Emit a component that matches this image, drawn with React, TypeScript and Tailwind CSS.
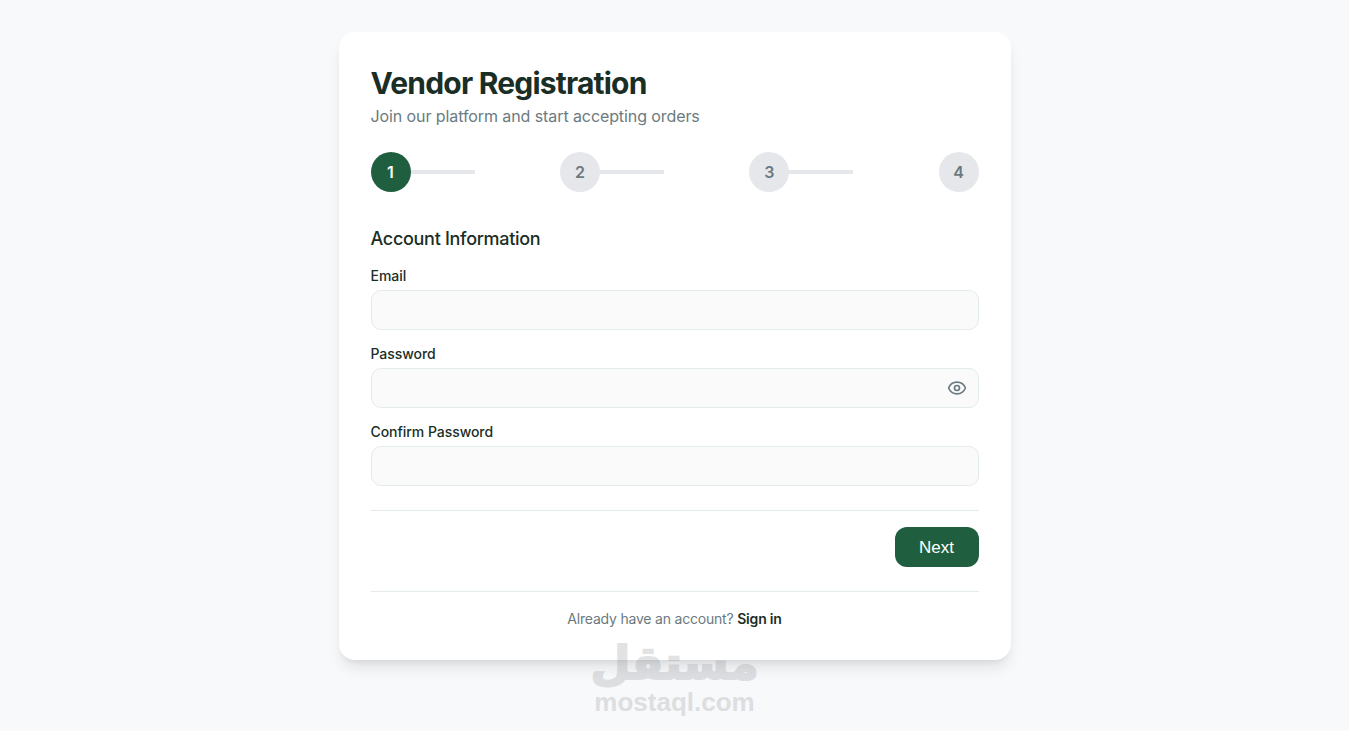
import { Eye } from 'lucide-react';

const steps = [1, 2, 3, 4];

function Field({ label, icon }: { label: string; icon?: boolean }) {
  return (
    <div className="mb-[14px]">
      <label className="block mb-1 text-[14px] leading-5 font-[450] text-[#1a2e25] tracking-[-0.05px]">{label}</label>
      <div className="relative">
        <input className="block w-full h-10 rounded-[10px] border border-[#e3ece9] bg-[#fafafa] px-3" />
        {icon && (
          <button className="absolute right-3 top-2.5 text-[#6b7a80]">
            <Eye size={20} strokeWidth={2} />
          </button>
        )}
      </div>
    </div>
  );
}

export default function App() {
  return (
    <div className="relative min-h-[731px] overflow-hidden bg-[#f8f9fb] pt-8 font-['Inter',sans-serif]">
      <div className="mx-auto w-[672px] h-[628px] rounded-2xl bg-white px-8 pt-[33px] shadow-[0_10px_15px_-3px_rgba(0,0,0,0.1),0_4px_6px_-4px_rgba(0,0,0,0.1)]">
        <h1 className="text-[30px] leading-9 font-bold tracking-[-0.8px] text-[#1a2e25]">Vendor Registration</h1>
        <p className="mt-[3px] text-[16px] leading-6 text-[#6b7a80] tracking-[-0.09px]">Join our platform and start accepting orders</p>

        <div className="mt-6 -mr-[0.2px] flex items-center justify-between">
          {steps.map((s, i) => (
            <div key={s} className="flex items-center">
              <div
                className={
                  s === 1
                    ? 'flex h-10 w-10 items-center justify-center rounded-full bg-[#1f5f3f] text-[16px] font-semibold text-white'
                    : 'flex h-10 w-10 items-center justify-center rounded-full bg-[#e5e7eb] text-[16px] font-semibold text-[#6b7a80]'
                }
              >
                {s}
              </div>
              {i < 3 && <div className="h-1 w-16 bg-[#e5e7eb]" />}
            </div>
          ))}
        </div>

        <h2 className="mt-[33px] mb-[13px] text-[18px] leading-7 font-medium text-[#1a2e25] tracking-[-0.3px]">Account Information</h2>

        <Field label="Email" />
        <Field label="Password" icon />
        <Field label="Confirm Password" />

        <div className="mt-[24px] flex justify-end border-t border-[#e3ece9] pt-4">
          <button className="h-10 w-[84px] rounded-xl bg-[#1f5f3f] pt-px text-[17px] text-white font-['Liberation_Sans',sans-serif]">Next</button>
        </div>

        <div className="mt-6 border-t border-[#e3ece9] pt-[17px] text-center text-[14px] leading-5 text-[#6b7a80] tracking-[-0.2px]">
          Already have an account? <a className="font-semibold text-[#1a2e25]">Sign in</a>
        </div>
      </div>

      <div className="absolute left-0 right-0 top-[636px] flex flex-col items-center text-[#8a8f94] opacity-25 pointer-events-none">
        <span className="text-[46px] leading-[54px] font-bold font-['DejaVu_Sans',sans-serif] [-webkit-text-stroke:2px_#8a8f94]">مستقل</span>
        <span className="text-[26px] leading-6 font-bold font-['Liberation_Sans',sans-serif]">mostaql.com</span>
      </div>
    </div>
  );
}
